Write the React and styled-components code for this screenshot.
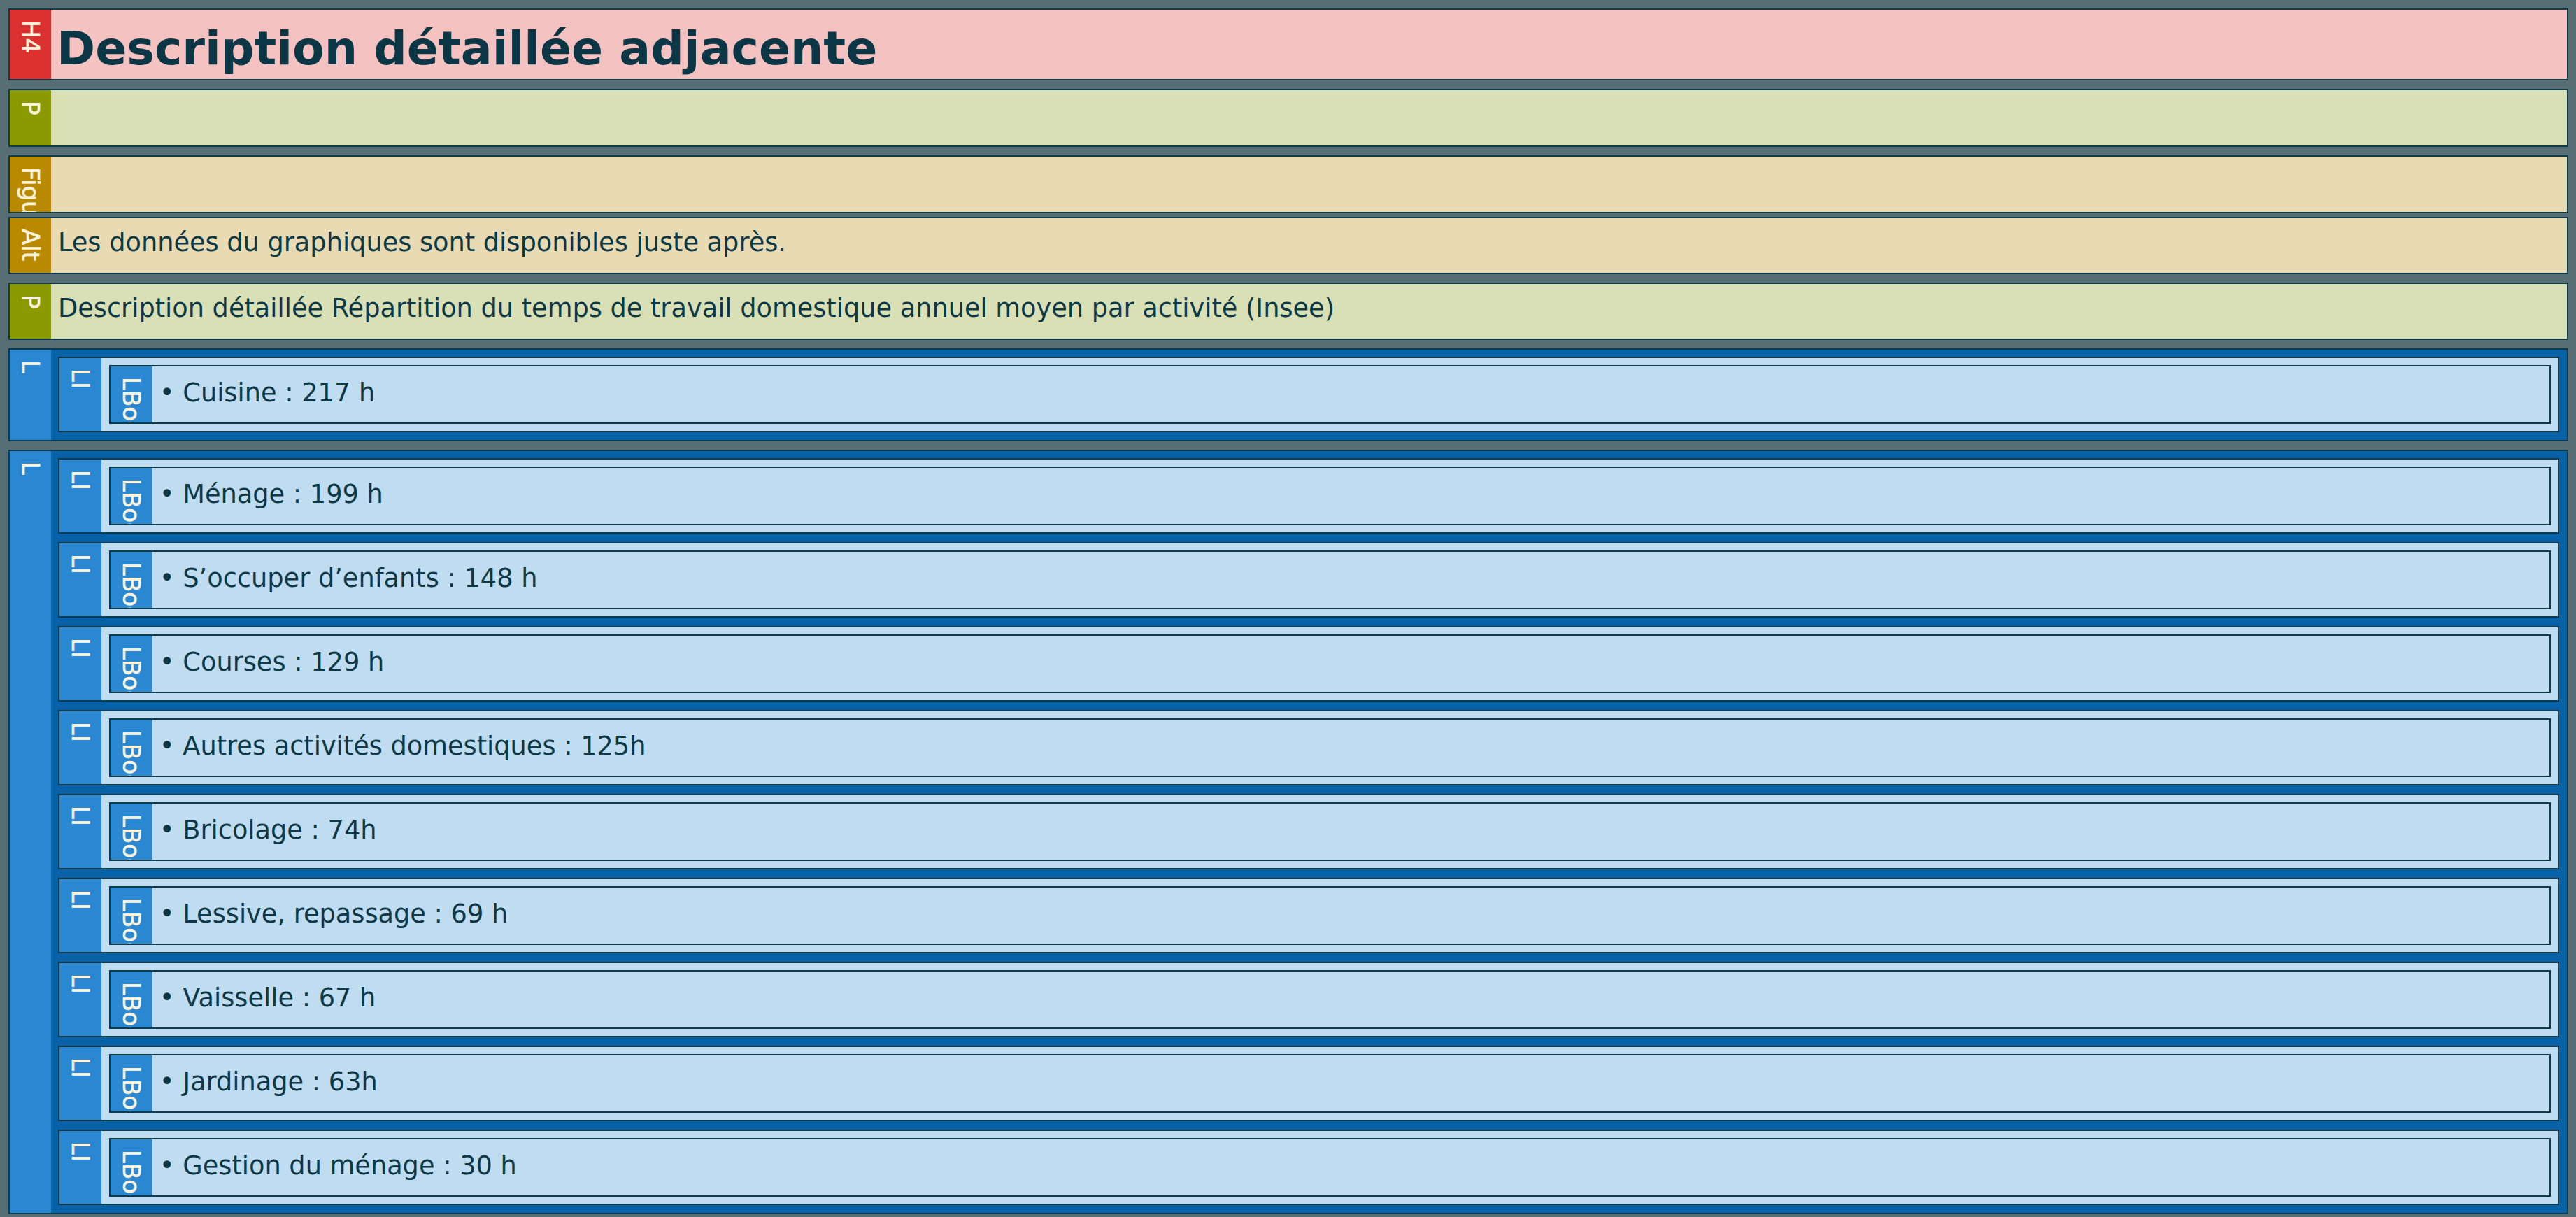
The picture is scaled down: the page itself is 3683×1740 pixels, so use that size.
import React from "react";
import styled, { createGlobalStyle } from "styled-components";

const GlobalStyle = createGlobalStyle`
  html, body {
    margin: 0;
    padding: 0;
    background: #576e75;
  }
  body {
    font-family: "DejaVu Sans", Verdana, sans-serif;
  }
  * { box-sizing: border-box; }
`;

const TYPES = {
  h4: { tag: "#dc3131", bg: "#f5c2c2" },
  p: { tag: "#8a9a00", bg: "#dae0b5" },
  fig: { tag: "#b98a00", bg: "#e8dbb3" },
  list: { tag: "#2a88d3", bg: "#0862a8" },
  li: { tag: "#2a88d3", bg: "#bfdcf1" },
};

const Page = styled.div`
  padding: 12px 11px 12px 12px;
  display: flex;
  flex-direction: column;
  gap: 12px;
`;

const FigureGroup = styled.div`
  display: flex;
  flex-direction: column;
  gap: 5px;
`;

const Block = styled.div`
  display: flex;
  border: 2px solid #0f3a48;
  background: ${(p) => p.$bg};
  height: ${(p) => (p.$h ? `${p.$h}px` : "auto")};
`;

const Label = styled.div`
  flex: 0 0 ${(p) => p.$w || 60}px;
  background: ${(p) => p.$color};
  display: flex;
  justify-content: center;
  align-items: flex-start;
  padding-top: 15px;
  overflow: hidden;
  contain: size;
`;

const LabelText = styled.span`
  writing-mode: vertical-rl;
  font-size: 34px;
  font-weight: normal;
  line-height: normal;
  color: #fbf3dc;
  white-space: nowrap;
  -webkit-text-stroke: 0.6px #fbf3dc;
`;

const Heading = styled.h4`
  margin: 0;
  flex: 1;
  padding: 16px 8px 0;
  font-size: 66.5px;
  line-height: 1.2;
  font-weight: bold;
  color: #0b3646;
`;

const Text = styled.div`
  flex: 1;
  padding: ${(p) => (p.$item ? "16px" : "13px")} 10px 0;
  font-size: 36.7px;
  line-height: 1.2;
  color: #0d3846;
  white-space: nowrap;
`;

const ListBody = styled.div`
  flex: 1;
  display: flex;
  flex-direction: column;
  gap: 12px;
  padding: 10px 11px 11px 10px;
`;

const ItemBody = styled.div`
  flex: 1;
  padding: 10px 10px 10px 11px;
`;

const Tag = ({ name, color, w }) => (
  <Label $color={color} $w={w}>
    <LabelText>{name}</LabelText>
  </Label>
);

const ListItem = ({ text }) => (
  <Block $bg={TYPES.li.bg}>
    <Tag name="LI" color={TYPES.li.tag} />
    <ItemBody>
      <Block $bg={TYPES.li.bg} $h={84}>
        <Tag name="LBody" color={TYPES.li.tag} />
        <Text $item>• {text}</Text>
      </Block>
    </ItemBody>
  </Block>
);

const List = ({ items }) => (
  <Block $bg={TYPES.list.bg}>
    <Tag name="L" color={TYPES.list.tag} w={59} />
    <ListBody>
      {items.map((t) => (
        <ListItem key={t} text={t} />
      ))}
    </ListBody>
  </Block>
);

const rest = [
  "Ménage : 199 h",
  "S’occuper d’enfants : 148 h",
  "Courses : 129 h",
  "Autres activités domestiques : 125h",
  "Bricolage : 74h",
  "Lessive, repassage : 69 h",
  "Vaisselle : 67 h",
  "Jardinage : 63h",
  "Gestion du ménage : 30 h",
];

export default function App() {
  return (
    <>
      <GlobalStyle />
      <Page>
        <Block $bg={TYPES.h4.bg} $h={103}>
          <Tag name="H4" color={TYPES.h4.tag} w={59} />
          <Heading>Description détaillée adjacente</Heading>
        </Block>
        <Block $bg={TYPES.p.bg} $h={83}>
          <Tag name="P" color={TYPES.p.tag} w={59} />
          <Text />
        </Block>
        <FigureGroup>
          <Block $bg={TYPES.fig.bg} $h={83}>
            <Tag name="Figure" color={TYPES.fig.tag} w={59} />
            <Text />
          </Block>
          <Block $bg={TYPES.fig.bg} $h={82}>
            <Tag name="Alt" color={TYPES.fig.tag} w={59} />
            <Text>Les données du graphiques sont disponibles juste après.</Text>
          </Block>
        </FigureGroup>
        <Block $bg={TYPES.p.bg} $h={82}>
          <Tag name="P" color={TYPES.p.tag} w={59} />
          <Text>
            Description détaillée Répartition du temps de travail domestique annuel moyen par activité (Insee)
          </Text>
        </Block>
        <List items={["Cuisine : 217 h"]} />
        <List items={rest} />
      </Page>
    </>
  );
}
